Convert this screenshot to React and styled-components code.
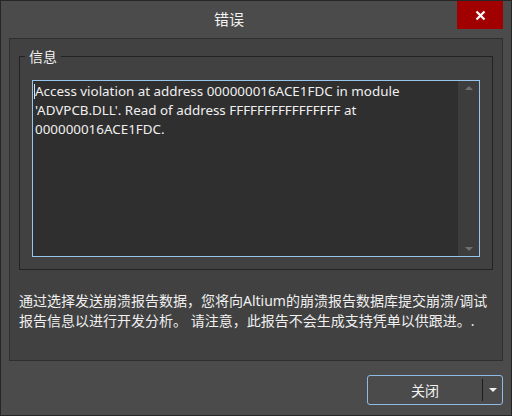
import styled, { createGlobalStyle } from 'styled-components';

const Global = createGlobalStyle`
    html, body { margin: 0; padding: 0; background: #4b4b4b; }
    * { box-sizing: border-box; }
`

const Window = styled.div`
    width: 512px;
    height: 416px;
    display: flex;
    flex-direction: column;
    background: #4b4b4b;
    border: 1px solid #262626;
    font-family: "Noto Sans", "Noto Sans CJK SC", sans-serif;
    color: #f2f2f2;
`

const TitleBar = styled.div`
    display: flex;
    height: 37px;
    padding-right: 8px;
`

const Title = styled.div`
    flex: 1;
    text-align: center;
    font-size: 15px;
    line-height: 37px;
`

const CloseButton = styled.div`
    width: 46px;
    height: 28px;
    background: #a10000;
    display: flex;
    align-items: center;
    justify-content: center;
`

const Panel = styled.div`
    margin: 0 8px;
    height: 323px;
    background: #414141;
    border: 1px solid #2f2f2f;
    padding: 17px 9px 0 9px;
    display: flex;
    flex-direction: column;
`

const Group = styled.div`
    position: relative;
    height: 214px;
    padding: 23px 12px 12px 12px;
    border: 1px solid #232323;
    display: flex;
`

const Legend = styled.span`
    position: absolute;
    left: 5px;
    top: -9px;
    font-size: 14px;
    padding: 0 4px;
    line-height: 17px;
    background: #414141;
    color: #f2f2f2;
`

const TextBox = styled.div`
    flex: 1;
    display: flex;
    border: 1px solid #99c5ec;
    background: #2f2f2f;
`

const TextContent = styled.div`
    flex: 1;
    padding: 1px 2px;
    font-size: 13.4px;
    line-height: 19px;
    color: #f0f0f0;
    position: relative;
`

const Caret = styled.span`
    position: absolute;
    left: 1px;
    top: 3px;
    width: 1px;
    height: 15px;
    background: #e0e0e0;
`

const ScrollBar = styled.div`
    width: 21px;
    background: #3d3d3d;
    display: flex;
    flex-direction: column;
    justify-content: space-between;
    align-items: center;
    padding: 5px 0;
`

const Arrow = styled.div`
    width: 0;
    height: 0;
    border-left: 4px solid transparent;
    border-right: 4px solid transparent;
    ${p => p.$down
        ? 'border-top: 4px solid #6f6f6f;'
        : 'border-bottom: 4px solid #6f6f6f;'}
`

const Notice = styled.p`
    margin: 21px 0 0 0;
    font-size: 14px;
    line-height: 20px;
    color: #f0f0f0;
    white-space: nowrap;
`

const Footer = styled.div`
    flex: 1;
    display: flex;
    justify-content: flex-end;
    align-items: flex-start;
    padding: 14px 8px 0 0;
`

const SplitButton = styled.div`
    width: 136px;
    height: 30px;
    display: flex;
    align-items: center;
    border: 1px solid #8fbbe4;
    border-radius: 3px;
    background: #4b4b4b;
`

const ButtonLabel = styled.div`
    flex: 1;
    text-align: center;
    font-size: 14px;
`

const Divider = styled.div`
    width: 1px;
    height: 22px;
    background: #1c1c1c;
`

const DropArrow = styled.div`
    width: 19px;
    display: flex;
    justify-content: center;
    &::after {
        content: '';
        border-left: 4px solid transparent;
        border-right: 4px solid transparent;
        border-top: 4px solid #f0f0f0;
    }
`

export default function App() {
    return (
        <>
            <Global />
            <Window>
                <TitleBar>
                    <Title>错误</Title>
                    <CloseButton>
                        <svg width="11" height="11" viewBox="0 0 11 11">
                            <path d="M1.5 1.5 L9.5 9.5 M9.5 1.5 L1.5 9.5" stroke="#fff" strokeWidth="2.2" />
                        </svg>
                    </CloseButton>
                </TitleBar>
                <Panel>
                    <Group>
                        <Legend>信息</Legend>
                        <TextBox>
                            <TextContent>
                                <Caret />
                                Access violation at address 000000016ACE1FDC in module 'ADVPCB.DLL'. Read of address FFFFFFFFFFFFFFFF at 000000016ACE1FDC.
                            </TextContent>
                            <ScrollBar>
                                <Arrow />
                                <Arrow $down />
                            </ScrollBar>
                        </TextBox>
                    </Group>
                    <Notice>
                        通过选择发送崩溃报告数据，您将向Altium的崩溃报告数据库提交崩溃/调试<br />
                        报告信息以进行开发分析。 请注意，此报告不会生成支持凭单以供跟进。.
                    </Notice>
                </Panel>
                <Footer>
                    <SplitButton>
                        <ButtonLabel>关闭</ButtonLabel>
                        <Divider />
                        <DropArrow />
                    </SplitButton>
                </Footer>
            </Window>
        </>
    );
}
